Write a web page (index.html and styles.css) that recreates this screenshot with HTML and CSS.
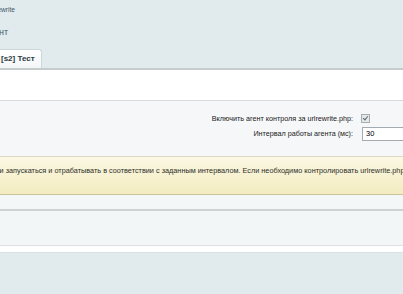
FILE: index.html
```html
<!DOCTYPE html>
<html lang="ru">
<head>
  <meta charset="UTF-8" />
  <title>urlrewrite</title>
  <link rel="stylesheet" href="styles.css">
</head>
<body>
  <div class="page">
    <div class="top">
      <div class="crumbs"><a href="#">Контроль urlrewrite</a></div>
      <h1 class="title">Агент</h1>
    </div>

    <div class="tabs">
      <div class="tab active">[s2] Тест</div>
    </div>

    <div class="panel">
      <div class="blank"></div>

      <div class="form">
        <div class="row">
          <label class="label">Включить агент контроля за urlrewrite.php:</label>
          <span class="field"><span class="check"></span></span>
        </div>
        <div class="row">
          <label class="label">Интервал работы агента (мс):</label>
          <span class="field"><input class="input" type="text" value="30"></span>
        </div>
      </div>

      <div class="note">
        <p>Агент будет сам проверки запускаться и отрабатывать в соответствии с заданным интервалом. Если необходимо контролировать urlrewrite.php постоянно, укажите небольшой интервал.</p>
      </div>

      <div class="gap"></div>
      <div class="buttons"></div>
      <div class="foot"></div>
    </div>
  </div>
</body>
</html>
```

FILE: styles.css
```css
body {
  margin: 0;
  background: #e1eaec;
  font-family: "Liberation Sans", Arial, sans-serif;
  color: #000;
  overflow: hidden;
}

.page {
  width: 403px;
  height: 294px;
  overflow: hidden;
}

/* Шапка: видна только правая часть текста */
.top {
  height: 49px;
  overflow: hidden;
}

.crumbs {
  display: flex;
  justify-content: flex-end;
  width: 15px;
  padding-top: 5px;
  font-size: 6.6px;
  line-height: 9px;
  white-space: nowrap;
}

.crumbs a {
  color: #3e5566;
  text-decoration: none;
}

.title {
  display: flex;
  justify-content: flex-end;
  width: 8px;
  margin: 13px 0 0;
  font-size: 9px;
  font-weight: normal;
  line-height: 11px;
  color: #4a5a64;
  white-space: nowrap;
}

/* Вкладки */
.tabs {
  display: flex;
  height: 19px;
  border-bottom: 2px solid #c6ccce;
}

.tab {
  padding: 0 6px 0 1px;
  margin-left: -1px;
  font-size: 8px;
  font-weight: bold;
  line-height: 18px;
  color: #2d3940;
  white-space: nowrap;
}

.tab.active {
  width: 34px;
  background: linear-gradient(#ffffff, #f3f6f7);
  border: 1px solid #cfd6d9;
  border-bottom: none;
  border-radius: 0 3px 0 0;
}

/* Основная панель */
.panel {
  width: 403px;
  background: #fff;
}

.blank {
  height: 30px;
  border-bottom: 1px solid #d7dbde;
}

.form {
  height: 55px;
  padding-top: 11px;
  box-sizing: border-box;
  background: #f5f7f8;
}

.row {
  display: flex;
  align-items: center;
  height: 13px;
  margin-bottom: 2px;
}

.label {
  flex-shrink: 0;
  width: 357px;
  padding-right: 4px;
  box-sizing: border-box;
  text-align: right;
  font-size: 7.2px;
  color: #1a1a1a;
  white-space: nowrap;
}

.field {
  display: flex;
  align-items: center;
  flex: 1;
}

.check {
  display: block;
  width: 7px;
  height: 7px;
  margin-left: 4px;
  border: 1px solid #a7aeb2;
  background: #e4e8ea;
  position: relative;
}

.check::after {
  content: "";
  position: absolute;
  left: 2px;
  top: 0;
  width: 2px;
  height: 4px;
  border: solid #5f6a70;
  border-width: 0 1px 1px 0;
  transform: rotate(40deg);
}

.input {
  flex-shrink: 0;
  width: 60px;
  height: 14px;
  margin: 0 0 0 5px;
  padding: 0 3px;
  box-sizing: border-box;
  border: 1px solid #a3abb0;
  font-family: "Liberation Sans", Arial, sans-serif;
  font-size: 7.5px;
  color: #000;
  background: #fff;
}

/* Примечание */
.note {
  height: 39px;
  box-sizing: border-box;
  border-top: 1px solid #dcdac4;
  border-bottom: 1px solid #c9c39c;
  background: linear-gradient(#fbf8e4, #f3ecc0);
  overflow: hidden;
}

.note p {
  margin: 9px 0 0 -84px;
  font-size: 7.3px;
  line-height: 9px;
  color: #2e2e26;
  white-space: nowrap;
}

.gap {
  height: 14px;
  background: #f3f7f8;
  border-bottom: 2px solid #cdd2d4;
}

.buttons {
  height: 34px;
  background: #f2f6f7;
  border-bottom: 1px solid #dde1e3;
}

.foot {
  height: 6px;
  background: #fff;
  border-bottom: 1px solid #d9e1e3;
}
```
